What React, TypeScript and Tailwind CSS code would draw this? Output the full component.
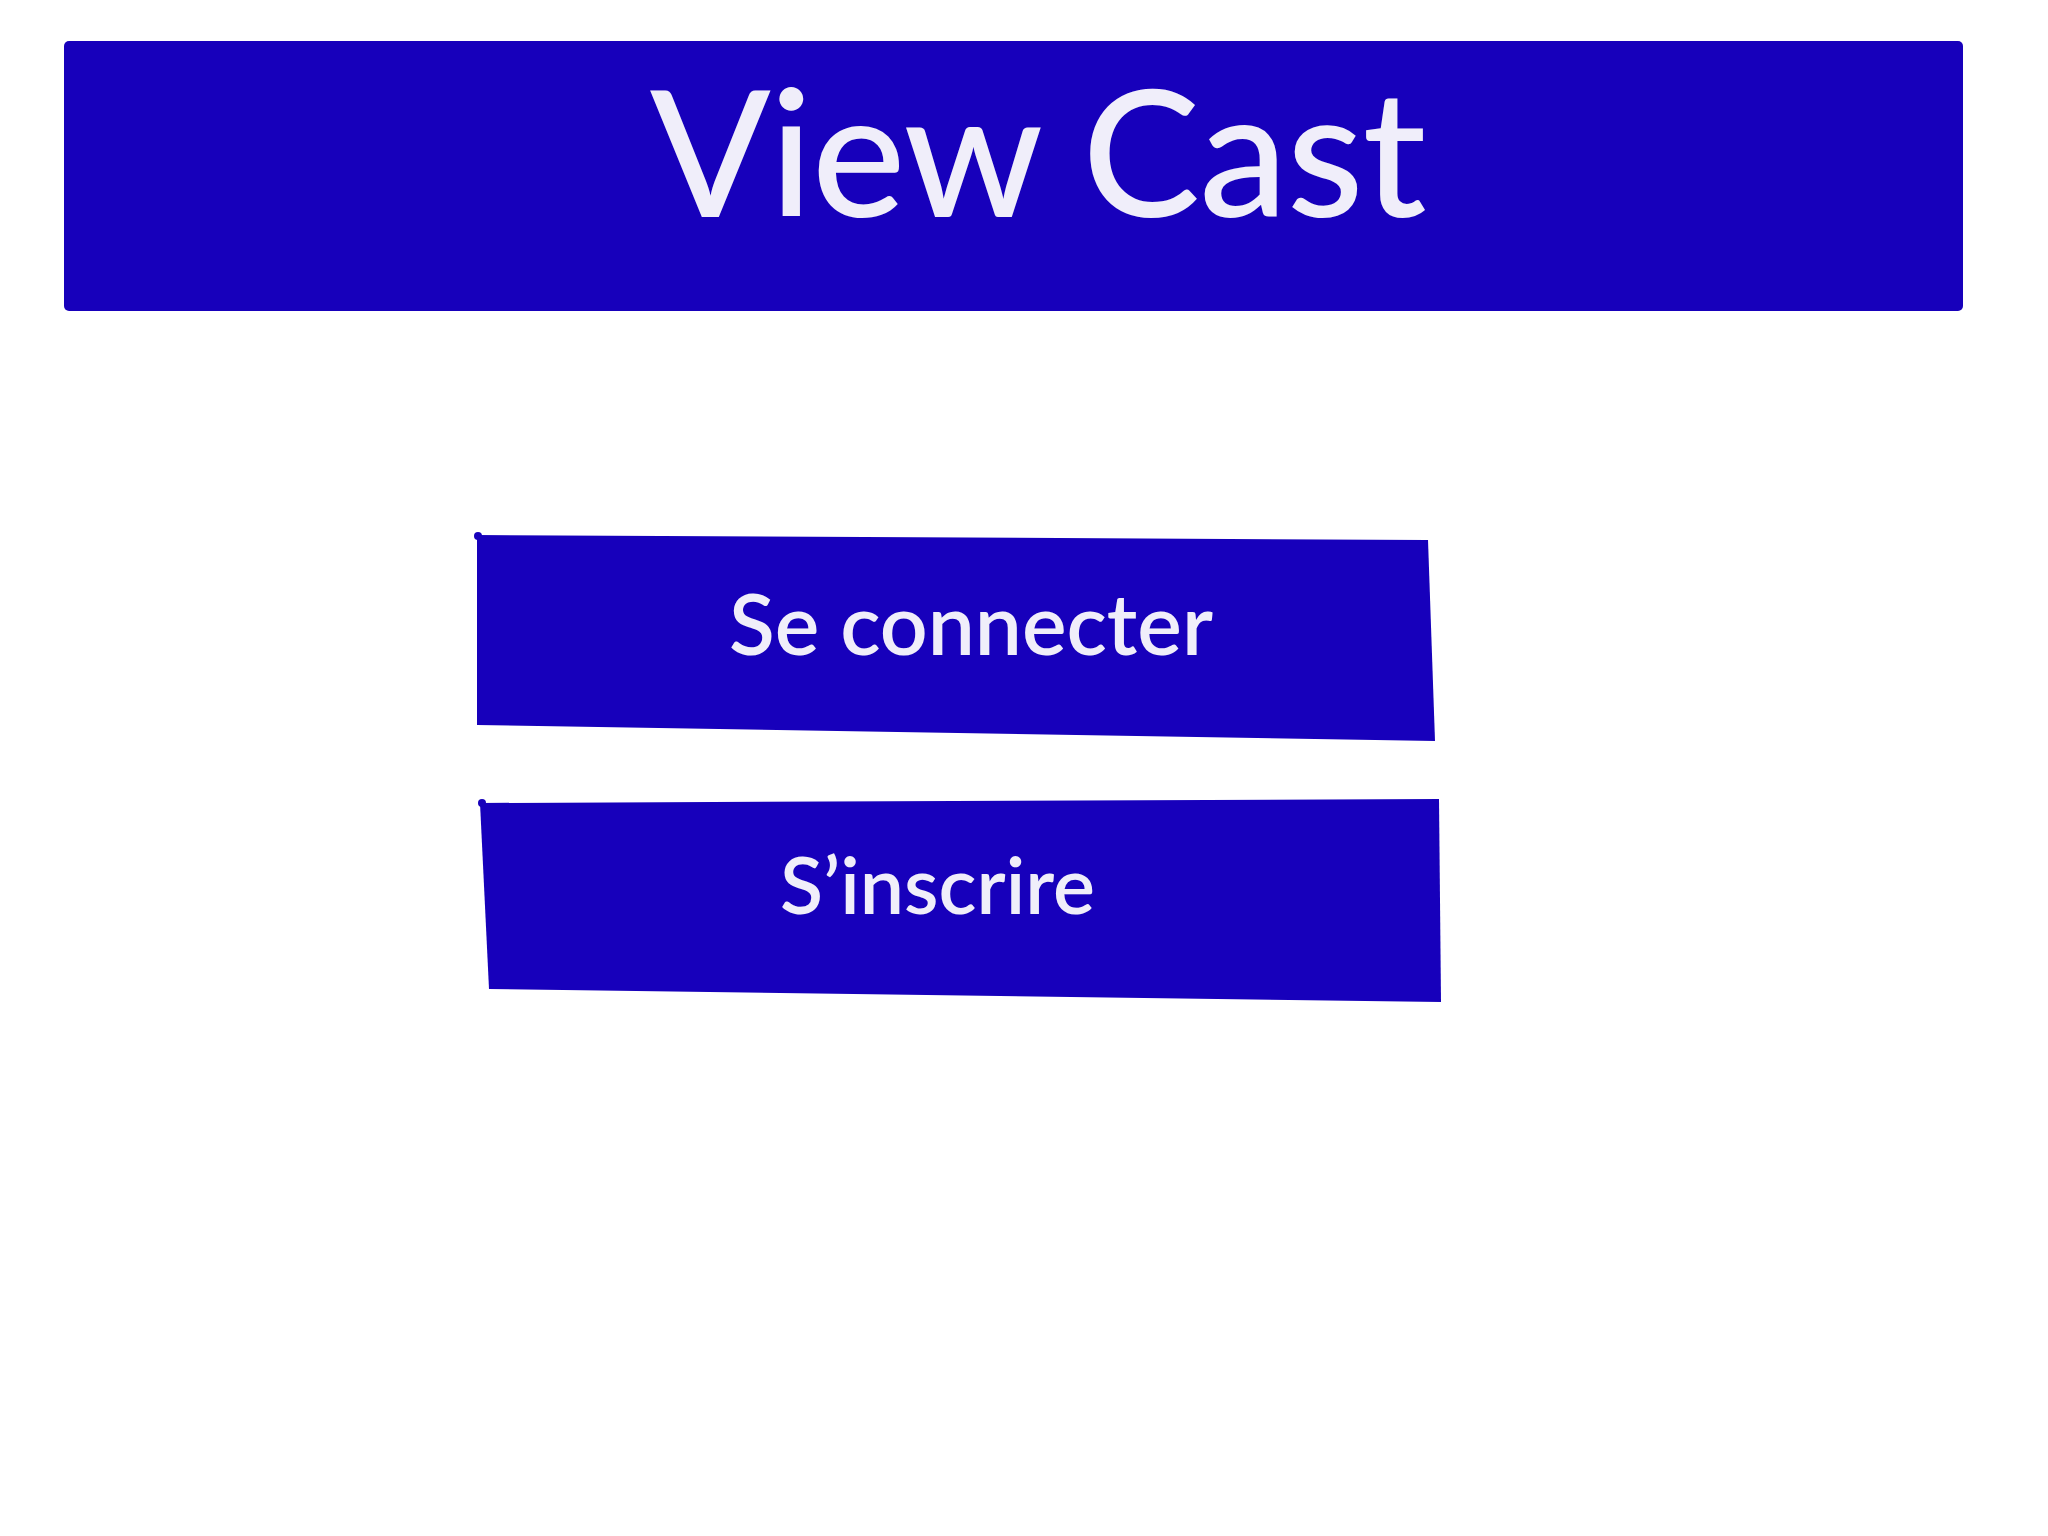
const blue = "bg-[#1700bb]";

function SketchButton({
  label,
  clip,
  className,
  textClass,
  dotClass,
}: {
  label: string;
  clip: string;
  className: string;
  textClass: string;
  dotClass: string;
}) {
  return (
    <div className={`relative ${className}`}>
      <button
        type="button"
        className={`flex h-full w-full items-start ${blue} ${clip} ${textClass} font-['Lato',sans-serif] font-semibold leading-none text-[#f0eefa]`}
      >
        {label}
      </button>
      <span className={`absolute h-[8px] w-[8px] rounded-full ${blue} ${dotClass}`} />
    </div>
  );
}

export default function App() {
  return (
    <div className="min-h-screen w-full bg-white pt-[41px]">
      {/* title bar */}
      <header className={`ml-[64px] h-[270px] w-[1899px] rounded-[5px] ${blue} pl-[586px] pt-[19px]`}>
        <h1 className="font-['Lato',sans-serif] text-[177px] font-medium leading-none tracking-[-1px] text-[#f0eefa]">
          View Cast
        </h1>
      </header>

      <SketchButton
        label="Se connecter"
        className="ml-[477px] mt-[224px] h-[206px] w-[958px]"
        clip="[clip-path:polygon(0_0,951px_5px,100%_100%,0_190px)] pl-[252px] pt-[46px]"
        textClass="text-[84px]"
        dotClass="-left-[3px] -top-[3px]"
      />

      <SketchButton
        label="S’inscrire"
        className="ml-[480px] mt-[58px] h-[203px] w-[961px]"
        clip="[clip-path:polygon(0_4px,959px_0,100%_100%,9px_190px)] pl-[300px] pt-[45px]"
        textClass="text-[79px]"
        dotClass="-left-[2px] top-0"
      />
    </div>
  );
}
